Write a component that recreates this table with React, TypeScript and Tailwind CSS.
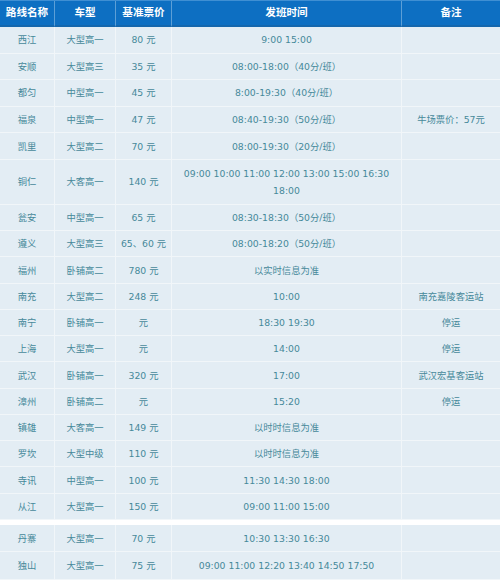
import React from "react";

type Row = { a: string; b: string; c: string; d: React.ReactNode; e?: string; h: string };

const rows: Row[] = [
  { a: "西江", b: "大型高一", c: "80 元", d: "9:00 15:00", h: "h-[26.6px]" },
  { a: "安顺", b: "大型高三", c: "35 元", d: "08:00-18:00（40分/班）", h: "h-[26.6px]" },
  { a: "都匀", b: "中型高一", c: "45 元", d: "8:00-19:30（40分/班）", h: "h-[26.6px]" },
  { a: "福泉", b: "中型高一", c: "47 元", d: "08:40-19:30（50分/班）", e: "牛场票价：57元", h: "h-[26.6px]" },
  { a: "凯里", b: "大型高二", c: "70 元", d: "08:00-19:30（20分/班）", h: "h-[26.6px]" },
  {
    a: "铜仁",
    b: "大客高一",
    c: "140 元",
    d: (
      <>
        09:00 10:00 11:00 12:00 13:00 15:00 16:30
        <br />
        18:00
      </>
    ),
    h: "h-[45px]",
  },
  { a: "瓮安", b: "中型高一", c: "65 元", d: "08:30-18:30（50分/班）", h: "h-[26.25px]" },
  { a: "遵义", b: "大型高三", c: "65、60 元", d: "08:00-18:20（50分/班）", h: "h-[26.25px]" },
  { a: "福州", b: "卧铺高二", c: "780 元", d: "以实时信息为准", h: "h-[26.25px]" },
  { a: "南充", b: "大型高二", c: "248 元", d: "10:00", e: "南充嘉陵客运站", h: "h-[26.25px]" },
  { a: "南宁", b: "卧铺高一", c: "元", d: "18:30 19:30", e: "停运", h: "h-[26.25px]" },
  { a: "上海", b: "大型高一", c: "元", d: "14:00", e: "停运", h: "h-[26.25px]" },
  { a: "武汉", b: "卧铺高一", c: "320 元", d: "17:00", e: "武汉宏基客运站", h: "h-[26.25px]" },
  { a: "漳州", b: "卧铺高二", c: "元", d: "15:20", e: "停运", h: "h-[26.25px]" },
  { a: "镇雄", b: "大客高一", c: "149 元", d: "以时时信息为准", h: "h-[26.25px]" },
  { a: "罗坎", b: "大型中级", c: "110 元", d: "以时时信息为准", h: "h-[26.25px]" },
  { a: "寺讯", b: "中型高一", c: "100 元", d: "11:30 14:30 18:00", h: "h-[26.25px]" },
  { a: "从江", b: "大型高一", c: "150 元", d: "09:00 11:00 15:00", h: "h-[26.25px]" },
];

const rows2: Row[] = [
  { a: "丹寨", b: "大型高一", c: "70 元", d: "10:30 13:30 16:30", h: "h-[27.5px]" },
  { a: "独山", b: "大型高一", c: "75 元", d: "09:00 11:00 12:20 13:40 14:50 17:50", h: "h-[27.5px]" },
];

const font = { fontFamily: '"DejaVu Sans", "Noto Sans CJK SC", sans-serif' };

function Cell({ children, last }: { children?: React.ReactNode; last?: boolean }) {
  return (
    <div
      className={`flex items-center justify-center text-center bg-[#e3edf4] border-b border-[#f1f6f9] ${
        last ? "" : "border-r"
      }`}
    >
      {children}
    </div>
  );
}

function DataRow({ r }: { r: Row }) {
  return (
    <div
      className={`grid grid-cols-[55px_61px_56px_230px_98px] ${r.h} text-[9.3px] leading-[17px] text-[#46899a]`}
    >
      <Cell>{r.a}</Cell>
      <Cell>{r.b}</Cell>
      <Cell>{r.c}</Cell>
      <Cell>{r.d}</Cell>
      <Cell last>{r.e}</Cell>
    </div>
  );
}

export default function App() {
  return (
    <div className="w-[500px] h-[580px] bg-white overflow-hidden" style={font}>
      <div className="grid grid-cols-[55px_61px_56px_230px_98px] h-[27px] bg-[#0d6fc2] border-t border-[#3f8fd3] text-white font-bold text-[10.6px]">
        {["路线名称", "车型", "基准票价", "发班时间", "备注"].map((t, i) => (
          <div
            key={t}
            className={`flex items-center justify-center border-b-2 border-[#1467ad] ${
              i < 4 ? "border-r border-r-[#5d9fd6]" : ""
            }`}
          >
            {t}
          </div>
        ))}
      </div>
      {rows.map((r) => (
        <DataRow key={r.a} r={r} />
      ))}
      <div className="h-[5px] bg-white" />
      {rows2.map((r) => (
        <DataRow key={r.a} r={r} />
      ))}
    </div>
  );
}
